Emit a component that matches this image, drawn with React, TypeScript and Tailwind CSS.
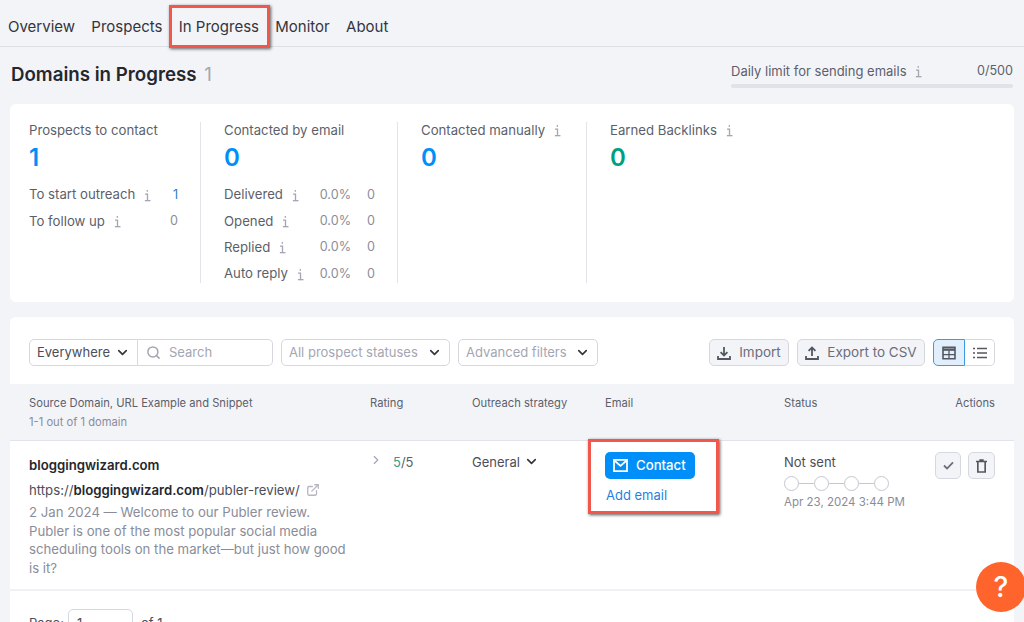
import { ChevronDown, ChevronRight, Search, ExternalLink } from 'lucide-react';

function Info() {
  return (
    <svg viewBox="0 0 8 14" className="w-[7px] h-[13px] text-[#a4a6b3] shrink-0" fill="none" stroke="currentColor" strokeWidth="1.5">
      <path d="M3.8 0.6v2.2" />
      <path d="M1.2 5.4h2.8v7.6" />
      <path d="M1 12.9h6.4" />
    </svg>
  );
}

function TrayArrow({ up }: { up?: boolean }) {
  return (
    <svg viewBox="0 0 14 14" className="w-[14px] h-[14px] text-[#54575f]" fill="none" stroke="currentColor" strokeWidth="1.8">
      {up ? <path d="M7 10V1.6M3.6 4.8 7 1.4l3.4 3.4" /> : <path d="M7 1v8.4M3.6 6.2 7 9.6l3.4-3.4" />}
      <path d="M1 10v3h12v-3" />
    </svg>
  );
}

function StatRow({ label, pct, value }: { label: string; pct: string; value: string }) {
  return (
    <div className="flex items-center h-[26.3px] text-[13.2px] text-[#5c5f6b]">
      <span className="mr-[9px]">{label}</span>
      <Info />
      <span className="ml-auto text-[12.6px] text-[#8a8d99]">{pct}</span>
      <span className="w-[24px] text-right text-[12.6px] text-[#8a8d99]">{value}</span>
    </div>
  );
}

function Select({ label, muted, className = '' }: { label: string; muted?: boolean; className?: string }) {
  return (
    <div className={`h-[27px] flex items-center justify-between border border-[#d6d8e0] rounded-[5px] pl-[7px] pr-[7px] bg-white text-[13px] ${muted ? 'text-[#a4a6b3]' : 'text-[#4b4e59]'} ${className}`}>
      <span>{label}</span>
      <ChevronDown className="w-[15px] h-[15px] text-[#33353d]" strokeWidth={2.6} />
    </div>
  );
}

function Step() {
  return <span className="w-[15px] h-[15px] rounded-full border border-[#c5c7d0] bg-white shrink-0" />;
}

export default function App() {
  return (
    <div className="h-[622px] overflow-hidden relative bg-[#f3f4f8] font-['Inter',sans-serif] text-[#33353d]">
      <nav className="h-[47px] border-b border-[#dfe0e6] flex items-end gap-[16.3px] pl-2 pb-[8px] text-[15px] leading-[22px] text-[#33353d]">
        <span>Overview</span>
        <span>Prospects</span>
        <span className="relative">
          In Progress
          <span className="absolute -left-[10px] -right-[11px] -top-[11px] -bottom-[10px] border-[3px] border-[#f0584c] shadow-[1px_1px_3px_rgba(0,0,0,0.6)]" />
        </span>
        <span>Monitor</span>
        <span>About</span>
      </nav>

      <div className="flex items-start justify-between pl-[11px] pr-[11px] h-[57px]">
        <h1 className="mt-[14px] text-[18.7px] leading-[28px] font-semibold text-[#25272e]">
          Domains in Progress <span className="ml-[3px] font-normal text-[#a4a6b3]">1</span>
        </h1>
        <div className="w-[282px] mt-[16px]">
          <div className="flex items-center text-[13px] leading-[16px] text-[#5c5f6b] h-[16px]">
            <span className="mr-[8px]">Daily limit for sending emails</span>
            <Info />
            <span className="ml-auto text-[12.6px]">0/500</span>
          </div>
          <div className="h-1 mt-[5px] rounded-sm bg-[#e0e1e9]" />
        </div>
      </div>

      <section className="mx-[10px] h-[198px] bg-white rounded-md flex pt-[18px] pl-[19px]">
        <div className="w-[172px] h-[161px] border-r border-[#e3e4ea] pr-[22px]">
          <div className="text-[13.2px] text-[#5c5f6b] h-[16px] leading-[16px]">Prospects to contact</div>
          <div className="text-[24px] leading-[30px] mt-[5px] mb-[9px] font-semibold text-[#008ff8]">1</div>
          <div className="flex items-center h-[26.3px] text-[13.2px] text-[#5c5f6b]">
            <span className="mr-[9px]">To start outreach</span>
            <Info />
            <span className="ml-auto text-[12.6px] text-[#2a7fc4]">1</span>
          </div>
          <div className="flex items-center h-[26.3px] text-[13.2px] text-[#5c5f6b]">
            <span className="mr-[9px]">To follow up</span>
            <Info />
            <span className="ml-auto text-[12.6px] text-[#8a8d99]">0</span>
          </div>
        </div>
        <div className="w-[197px] h-[161px] border-r border-[#e3e4ea] pl-[23px] pr-[22px]">
          <div className="text-[13.2px] text-[#5c5f6b] h-[16px] leading-[16px]">Contacted by email</div>
          <div className="text-[24px] leading-[30px] mt-[5px] mb-[9px] font-semibold text-[#008ff8]">0</div>
          <StatRow label="Delivered" pct="0.0%" value="0" />
          <StatRow label="Opened" pct="0.0%" value="0" />
          <StatRow label="Replied" pct="0.0%" value="0" />
          <StatRow label="Auto reply" pct="0.0%" value="0" />
        </div>
        <div className="w-[189px] h-[161px] border-r border-[#e3e4ea] pl-[23px]">
          <div className="flex items-center gap-[9px] text-[13.2px] leading-[16px] text-[#5c5f6b] h-[16px]">
            Contacted manually <Info />
          </div>
          <div className="text-[24px] leading-[30px] mt-[5px] font-semibold text-[#008ff8]">0</div>
        </div>
        <div className="pl-[23px]">
          <div className="flex items-center gap-[9px] text-[13.2px] leading-[16px] text-[#5c5f6b] h-[16px]">
            Earned Backlinks <Info />
          </div>
          <div className="text-[24px] leading-[30px] mt-[5px] font-semibold text-[#009f81]">0</div>
        </div>
      </section>

      <section className="mx-[10px] mt-[15px] bg-white rounded-t-md">
        <div className="flex items-center pt-[22px] pb-[18px] pl-[19px] pr-[19px]">
          <div className="flex">
            <Select label="Everywhere" className="w-[109px] rounded-r-none" />
            <div className="w-[135px] h-[27px] flex items-center gap-[8px] border border-l-0 border-[#d6d8e0] rounded-r-[5px] pl-[8px] text-[13px] text-[#a4a6b3]">
              <Search className="w-[15px] h-[15px] text-[#a4a6b3]" strokeWidth={2.4} />
              Search
            </div>
          </div>
          <Select label="All prospect statuses" muted className="w-[169px] ml-2" />
          <Select label="Advanced filters" muted className="w-[140px] ml-2" />
          <div className="ml-auto flex items-center gap-2">
            <div className="h-[27px] w-[80px] flex items-center justify-center gap-[8px] border border-[#d6d8e0] rounded-[5px] bg-[#f3f4f8] text-[13.5px] text-[#6b6e7a]">
              <TrayArrow /> Import
            </div>
            <div className="h-[27px] w-[128px] flex items-center justify-center gap-[8px] border border-[#d6d8e0] rounded-[5px] bg-[#f3f4f8] text-[13.5px] text-[#6b6e7a]">
              <TrayArrow up /> Export to CSV
            </div>
            <div className="flex h-[27px]">
              <div className="w-[32px] flex items-center justify-center border border-[#3f9be0] rounded-l-[5px] bg-[#e0effb]">
                <svg viewBox="0 0 14 14" className="w-[14px] h-[14px] text-[#54575f]" fill="none" stroke="currentColor">
                  <path strokeWidth="1.6" d="M1 1.2h12v11.6H1z" />
                  <path strokeWidth="2.4" d="M1 3.6h12" />
                  <path strokeWidth="1.3" d="M1 8.6h12M7 4.5v8" />
                </svg>
              </div>
              <div className="w-[30px] flex items-center justify-center border border-l-0 border-[#d6d8e0] rounded-r-[5px]">
                <svg viewBox="0 0 14 12" className="w-[14px] h-[12px] text-[#54575f]" fill="none" stroke="currentColor" strokeWidth="1.6">
                  <path d="M4 1.5h10M4 6h10M4 10.5h10" />
                  <path d="M0 1.5h2M0 6h2M0 10.5h2" />
                </svg>
              </div>
            </div>
          </div>
        </div>

        <div className="h-[57px] bg-[#f3f4f8] border-b border-[#e3e4ea] grid grid-cols-[341px_102px_133px_179px_1fr] pl-[19px] pr-[19px] pt-[11px] text-[11.2px] text-[#5c5f6b]">
          <div>
            <div className="h-[16px] leading-[16px]">Source Domain, URL Example and Snippet</div>
            <div className="mt-[3px] h-[16px] leading-[16px] text-[#8a8d99]">1-1 out of 1 domain</div>
          </div>
          <div className="leading-[16px]">Rating</div>
          <div className="leading-[16px]">Outreach strategy</div>
          <div className="leading-[16px]">Email</div>
          <div className="flex justify-between leading-[16px]">
            <span>Status</span>
            <span>Actions</span>
          </div>
        </div>

        <div className="h-[150px] border-b-2 border-[#f0f1f5] grid grid-cols-[341px_102px_133px_179px_1fr] pl-[19px] pr-[18px] text-[13px]">
          <div className="pt-[16px]">
            <div className="text-[13.2px] font-semibold leading-[16px] text-[#25272e]">bloggingwizard.com</div>
            <div className="flex items-center mt-[9px] text-[13.2px] leading-[16px] text-[#4b4e59]">
              https://<b className="font-semibold text-[#25272e]">bloggingwizard.com</b>/publer-review/
              <ExternalLink className="w-[14px] h-[14px] ml-[6px] text-[#b4b6c0]" strokeWidth={2.2} />
            </div>
            <p className="mt-[5px] text-[13.2px] leading-[18.6px] text-[#8a8d99] w-[320px]">
              2 Jan 2024 — Welcome to our Publer review. Publer is one of the most popular social media scheduling tools on the market—but just how good is it?
            </p>
          </div>
          <div className="pt-[13px] flex items-start text-[#5c5f6b]">
            <ChevronRight className="w-[14px] h-[14px] -mt-[1px] mr-[7px] -ml-[1px] text-[#a4a6b3]" strokeWidth={2} />
            <span className="ml-[3px] leading-[16px]"><span className="text-[#3c9a86]">5</span>/5</span>
          </div>
          <div className="pt-[13px] flex items-start text-[#4b4e59] leading-[16px]">
            General
            <ChevronDown className="w-[15px] h-[15px] ml-[4px] text-[#33353d]" strokeWidth={2.6} />
          </div>
          <div className="pt-[11px]">
            <div className="relative w-[90px]">
              <div className="h-[27px] rounded-[5px] bg-[#008ff8] text-white flex items-center gap-[8px] pl-2 text-[13.2px] font-medium">
                <svg viewBox="0 0 16 14" className="w-[15px] h-[13px]" fill="none" stroke="currentColor" strokeWidth="1.9">
                  <path d="M1 1h14v12H1z" />
                  <path d="M1.4 1.6 8 7.4l6.6-5.8" />
                </svg>
                Contact
              </div>
              <div className="mt-[8px] ml-px leading-[16px] text-[#2a7fdc]">Add email</div>
              <span className="absolute -left-[17px] -right-[24px] -top-[13px] -bottom-[11px] border-[3px] border-[#f0584c] shadow-[1px_1px_3px_rgba(0,0,0,0.65)]" />
            </div>
          </div>
          <div className="flex justify-between pt-[13px]">
            <div>
              <div className="leading-[16px] text-[#4b4e59]">Not sent</div>
              <div className="flex items-center mt-[6px]">
                <Step /><span className="w-[15px] h-px bg-[#c5c7d0]" />
                <Step /><span className="w-[15px] h-px bg-[#c5c7d0]" />
                <Step /><span className="w-[15px] h-px bg-[#c5c7d0]" />
                <Step />
              </div>
              <div className="mt-[3px] text-[11.5px] leading-[16px] text-[#8a8d99]">Apr 23, 2024 3:44 PM</div>
            </div>
            <div className="flex gap-[7px] -mt-[2px] mr-px">
              <div className="w-[26px] h-[27px] flex items-center justify-center border border-[#d6d8e0] rounded-[5px] bg-[#f3f4f8]">
                <svg viewBox="0 0 12 10" className="w-[11px] h-[9px] text-[#6b6e7a]" fill="none" stroke="currentColor" strokeWidth="2">
                  <path d="M1 5l3.4 3.4L11 1.4" />
                </svg>
              </div>
              <div className="w-[27px] h-[27px] flex items-center justify-center border border-[#d6d8e0] rounded-[5px] bg-[#f3f4f8]">
                <svg viewBox="0 0 12 15" className="w-[11px] h-[14px] text-[#54575f]" fill="none" stroke="currentColor" strokeWidth="1.8">
                  <path d="M0 2.6h12M3.6 1h4.8" />
                  <path d="M2 2.6v11.4h8V2.6" />
                </svg>
              </div>
            </div>
          </div>
        </div>

        <div className="flex items-center pt-[18px] pl-[19px] text-[13px] text-[#4b4e59]">
          Page:
          <div className="w-[65px] h-[30px] ml-[4px] mr-2 border border-[#d6d8e0] rounded-[5px] pl-2 flex items-center">1</div>
          of 1
        </div>
      </section>

      <div className="absolute left-[976px] top-[562px] w-[50px] h-[50px] rounded-full bg-[#ff642d] flex items-center justify-center text-white text-[28px] font-medium">
        ?
      </div>
    </div>
  );
}
